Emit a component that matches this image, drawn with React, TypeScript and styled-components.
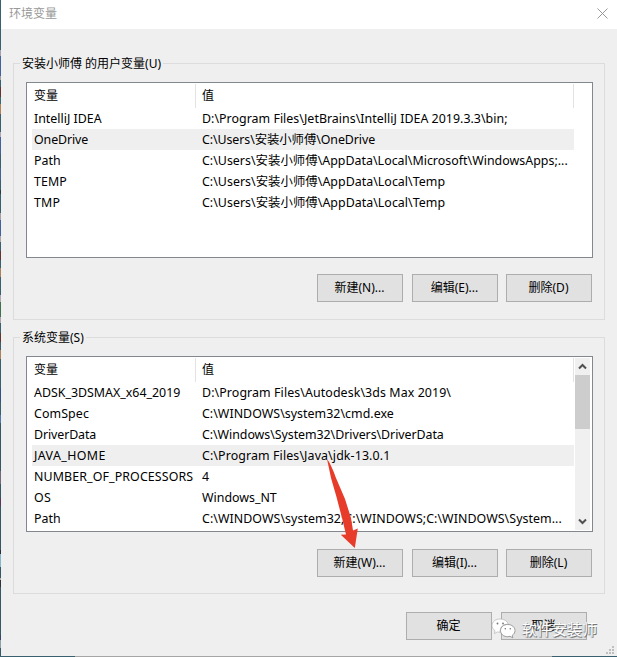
import React from "react";
import styled, { createGlobalStyle } from "styled-components";

const GlobalStyle = createGlobalStyle`
  * { box-sizing: border-box; }
  html, body { margin: 0; padding: 0; overflow: hidden; }
  body {
    font: 12.4px/21px "Noto Sans", "Noto Sans CJK SC", sans-serif;
    color: #000;
  }
`;

const Screen = styled.div`
  position: relative;
  width: 617px;
  height: 657px;
  display: grid;
  grid-template: 656px 1px / 1px 616px;
  overflow: hidden;
  background: #efefef;
`;

const DesktopEdge = styled.div`
  background: linear-gradient(#38606e 50px, #a79fae 50px 56px, #4560a0 56px 76px, #a09ca3 76px 80px, #38606e 80px 87px, #643336 87px 97px, #3c6874 97px 104px, #b08254 104px 114px, #38606e 114px 132px, #b0a8ae 132px 137px, #4560a0 137px 154px, #38606e 154px 168px, #44619a 168px 180px, #38606e 180px 190px, #303a3e 190px 194px, #38606e 194px 213px, #a79fa6 213px 220px, #4560a0 220px 236px, #aaa6aa 236px 242px, #38606e 242px 251px, #643336 251px 260px, #38606e 260px 268px, #ac805b 268px 277px, #38606e 277px 295px, #b0aab0 295px 302px, #3f704f 302px 317px, #aaa6aa 317px 323px, #38606e 323px 333px, #643336 333px 342px, #38606e 342px 350px, #ac805b 350px 359px, #38606e 359px 388px, #354f87 388px 402px, #38606e 402px 415px, #5078b0 415px 423px, #365764 423px 471px, #75697a 471px 484px, #365764 484px 498px, #5b365d 498px 506px, #365764 506px 550px, #292d39 550px 554px, #83b8d0 554px 567px, #365764 567px 578px, #b0b0a8 578px 580px, #30343a 580px 587px, #365764 587px 635px, #394568 635px 640px, #8aa1a7 640px 648px, #365764 648px);
`;

const BottomEdge = styled.div`
  grid-column: 1 / 3;
  background: linear-gradient(90deg, #38606e 75px, #a5a5a5 75px 552px, #38606e 552px);
`;

const Dialog = styled.main`
  display: flex;
  flex-direction: column;
`;

const TitleBar = styled.header`
  flex: 0 0 29px;
  display: flex;
  justify-content: space-between;
  align-items: flex-start;
  padding: 3px 9px 0 8px;
  background: #fff;
  color: #999;
  font-size: 12px;
  svg { margin-top: 5px; }
`;

const Groups = styled.div`
  display: flex;
  flex-direction: column;
  gap: 9px;
  padding: 26px 12px 0;
`;

const Group = styled.fieldset`
  width: 592px;
  height: 265px;
  margin: 0;
  padding: 10px 11px 0 12px;
  border: 1px solid #dcdcdc;
  min-width: 0;
`;

const Legend = styled.legend`
  height: 17px;
  margin-left: -6px;
  padding: 0 2px;
  font-size: 12px;
  line-height: 17px;
  white-space: nowrap;
`;

const ListBox = styled.div`
  display: flex;
  width: 567px;
  height: 176px;
  border: 1px solid #828790;
  background: #fff;
  overflow: hidden;
`;

const Table = styled.div`
  flex: 0 0 548px;
  padding: 1px 0 0 5px;
`;

const HeaderRow = styled.div`
  display: grid;
  grid-template-columns: 164px 378px;
  height: 24px;
  margin-right: 1px;
  font-size: 12px;
  line-height: 24px;
`;

const HeaderCell = styled.div`
  padding-left: 2px;
  border-right: 1px solid #e2e2e2;
  & + & { padding-left: 6px; }
`;

const Row = styled.div<{ $selected?: boolean }>`
  display: grid;
  grid-template-columns: 164px 377px;
  height: 21px;
  width: 542px;
  background: ${(p) => (p.$selected ? "#efefef" : "transparent")};
`;

const Cell = styled.span<{ $track?: number }>`
  padding-left: 2px;
  white-space: pre;
  letter-spacing: ${(p) => p.$track ?? 0}px;
  & + & { padding-left: 6px; }
`;

const ScrollBar = styled.div`
  width: 15px;
  height: 172px;
  margin-top: 1px;
  display: grid;
  grid-template-rows: 17px 54px 1fr 17px;
  justify-items: center;
  align-items: center;
  background: #f0f0f0;
`;

const Thumb = styled.div`
  width: 15px;
  height: 54px;
  background: #cdcdcd;
`;

const ButtonRow = styled.div<{ $top: number }>`
  display: flex;
  padding-left: 291px;
  padding-top: ${(p) => p.$top}px;
`;

const Button = styled.button<{ $gap?: number }>`
  flex: 0 0 86px;
  height: 28px;
  margin: 0 0 0 ${(p) => p.$gap ?? 0}px;
  padding: 0 1px 1px 0;
  border: 1px solid #adadad;
  background: #e1e1e1;
  color: #000;
  font: inherit;
  font-size: 12px;
  white-space: nowrap;
`;

const Footer = styled.footer`
  display: flex;
  padding: 18px 0 0 405px;
`;

const ArrowOverlay = styled.svg`
  position: absolute;
  left: 320px;
  top: 455px;
`;

const Watermark = styled.div`
  position: absolute;
  left: 491px;
  top: 616px;
  display: flex;
  color: #fff;
  font: 15px/25px "Noto Sans CJK SC", sans-serif;
  text-shadow: 1px 1px 0 #777, 0 1px 1px #888;
  white-space: nowrap;
  svg { margin-right: 6px; }
`;

const Grip = styled.svg`
  position: absolute;
  left: 606px;
  top: 646px;
`;

type Entry = { name: string; value: string; selected?: boolean; nt?: number; vt?: number };

const userVars: Entry[] = [
  { name: "IntelliJ IDEA", value: "D:\\Program Files\\JetBrains\\IntelliJ IDEA 2019.3.3\\bin;", vt: 0.03 },
  { name: "OneDrive", value: "C:\\Users\\安装小师傅\\OneDrive", selected: true, nt: -0.1, vt: -0.08 },
  { name: "Path", value: "C:\\Users\\安装小师傅\\AppData\\Local\\Microsoft\\WindowsApps;...", vt: 0.02 },
  { name: "TEMP", value: "C:\\Users\\安装小师傅\\AppData\\Local\\Temp", nt: 0.1, vt: 0.03 },
  { name: "TMP", value: "C:\\Users\\安装小师傅\\AppData\\Local\\Temp", nt: 0.2, vt: 0.03 },
];

const systemVars: Entry[] = [
  { name: "ADSK_3DSMAX_x64_2019", value: "D:\\Program Files\\Autodesk\\3ds Max 2019\\", vt: 0.09 },
  { name: "ComSpec", value: "C:\\WINDOWS\\system32\\cmd.exe", nt: 0.1, vt: 0.03 },
  { name: "DriverData", value: "C:\\Windows\\System32\\Drivers\\DriverData", nt: -0.1, vt: -0.05 },
  { name: "JAVA_HOME", value: "C:\\Program Files\\Java\\jdk-13.0.1", selected: true, nt: 0.4, vt: 0.11 },
  { name: "NUMBER_OF_PROCESSORS", value: "4", nt: 0.12 },
  { name: "OS", value: "Windows_NT", nt: 0.4 },
  { name: "Path", value: "C:\\WINDOWS\\system32;C:\\WINDOWS;C:\\WINDOWS\\System...", vt: 0.06 },
];

function Chevron({ down }: { down?: boolean }) {
  return (
    <svg width="9" height="7" viewBox="0 0 9 7">
      <path d={down ? "M1 1.5 4.5 5 8 1.5" : "M1 5.5 4.5 2 8 5.5"} fill="none" stroke="#505050" strokeWidth="2" />
    </svg>
  );
}

function VariableList({ entries, scroll }: { entries: Entry[]; scroll?: boolean }) {
  return (
    <ListBox>
      <Table>
        <HeaderRow>
          <HeaderCell>变量</HeaderCell>
          <HeaderCell>值</HeaderCell>
        </HeaderRow>
        {entries.map((e) => (
          <Row key={e.name} $selected={e.selected}>
            <Cell $track={e.nt}>{e.name}</Cell>
            <Cell $track={e.vt}>{e.value}</Cell>
          </Row>
        ))}
      </Table>
      {scroll && (
        <ScrollBar>
          <Chevron />
          <Thumb />
          <span />
          <Chevron down />
        </ScrollBar>
      )}
    </ListBox>
  );
}

export default function App() {
  return (
    <>
      <GlobalStyle />
      <Screen>
        <DesktopEdge />
        <Dialog>
          <TitleBar>
            <span>环境变量</span>
            <svg width="11" height="11" viewBox="0 0 11 11">
              <path d="M.5.5l10 10M10.5.5l-10 10" stroke="#999" strokeWidth="1" />
            </svg>
          </TitleBar>
          <Groups>
            <Group>
              <Legend>安装小师傅 的用户变量(U)</Legend>
              <VariableList entries={userVars} />
              <ButtonRow $top={16}>
                <Button>新建(N)...</Button>
                <Button $gap={9}>编辑(E)...</Button>
                <Button $gap={8}>删除(D)</Button>
              </ButtonRow>
            </Group>
            <Group>
              <Legend>系统变量(S)</Legend>
              <VariableList entries={systemVars} scroll />
              <ButtonRow $top={17}>
                <Button>新建(W)...</Button>
                <Button $gap={9}>编辑(I)...</Button>
                <Button $gap={8}>删除(L)</Button>
              </ButtonRow>
            </Group>
          </Groups>
          <Footer>
            <Button>确定</Button>
            <Button $gap={9}>取消</Button>
          </Footer>
        </Dialog>
        <BottomEdge />
        <ArrowOverlay width="42" height="96" viewBox="0 0 42 96">
          <path d="M7 4 Q11 9 16 23 L25 44 L31 63 L33 75.500 L37.800 73.500 L34.800 93 L20.800 79.800 L26 79.500 L22 63 L16.500 42 L11 23Z" fill="#e83c2b" />
        </ArrowOverlay>
        <Watermark>
          <svg width="25" height="24" viewBox="0 0 25 24">
            <path d="M9 3C4.500 3 1 5.800 1 9.500c0 2.200 1.200 4 3 5.200L3.500 17.500l3-1.600 2.500.4C9 10 13 8 17.300 8.300 16.500 5 13 3 9 3Z" fill="#fff" stroke="#aaa" strokeWidth=".6" />
            <path d="M16.700 8.500c-4.200 0-7.200 2.700-7.200 6.100s3 6.100 7.200 6.100l2.300-.4 2.800 1.500-.5-2.500c1.700-1.200 2.700-2.800 2.700-4.700 0-3.400-3.100-6.100-7.300-6.100Z" fill="#fff" stroke="#888" strokeWidth=".8" />
            <g fill="#777">
              <circle cx="6.500" cy="7.500" r=".9" />
              <circle cx="12" cy="7.500" r=".9" />
              <circle cx="14.300" cy="12.700" r=".8" />
              <circle cx="19.300" cy="12.700" r=".8" />
            </g>
          </svg>
          <span>软件安装师</span>
        </Watermark>
        <Grip width="8" height="8" viewBox="0 0 8 8">
          <path d="M6 0h2v2H6zM3 3h2v2H3zM6 3h2v2H6zM0 6h2v2H0zM3 6h2v2H3zM6 6h2v2H6z" fill="#bfbfbf" />
        </Grip>
      </Screen>
    </>
  );
}
